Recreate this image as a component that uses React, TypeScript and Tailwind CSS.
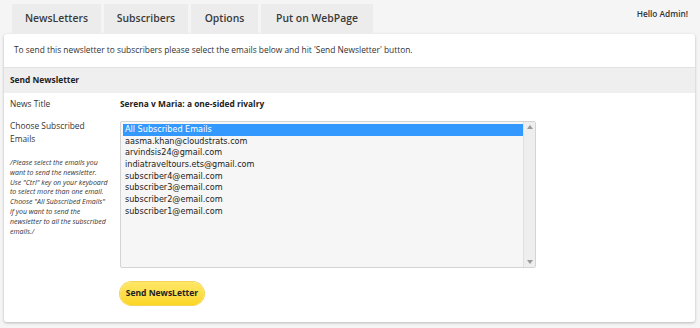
import React, { useState } from 'react';

const tabs = [
  { label: 'NewsLetters', w: 'w-[89px]' },
  { label: 'Subscribers', w: 'w-[84px]' },
  { label: 'Options', w: 'w-[67px]' },
  { label: 'Put on WebPage', w: 'w-[112px]' },
];

const emails = [
  'All Subscribed Emails',
  'aasma.khan@cloudstrats.com',
  'arvindsis24@gmail.com',
  'indiatraveltours.ets@gmail.com',
  'subscriber4@email.com',
  'subscriber3@email.com',
  'subscriber2@email.com',
  'subscriber1@email.com',
];

const noteLines = [
  '/Please select the emails you',
  'want to send the newsletter.',
  'Use "Ctrl" key on your keyboard',
  'to select more than one email.',
  'Choose "All Subscribed Emails"',
  'if you want to send the',
  'newsletter to all the subscribed',
  'emails./',
];

const App: React.FC = () => {
  const [selected, setSelected] = useState(0);

  return (
    <div className="w-[700px] h-[328px] bg-[#f5f5f5] font-['Open_Sans',sans-serif] text-[#222] overflow-hidden">
      {/* Top bar with tabs */}
      <div className="flex items-end justify-between h-[34px] pl-[12px] pr-[12px]">
        <div className="flex gap-[3px] h-[30px]">
          {tabs.map((t) => (
            <div
              key={t.label}
              className={`${t.w} flex items-center justify-center bg-[#ececec] text-[10.4px] font-semibold text-[#3a3a3a]`}
            >
              {t.label}
            </div>
          ))}
        </div>
        <div className="self-start pt-[8px] text-[8.3px] font-semibold text-[#333]">Hello Admin!</div>
      </div>

      {/* Main panel */}
      <div className="ml-[4px] mr-[5px] bg-white rounded-[3px] shadow-[0_1px_3px_rgba(0,0,0,0.25)] h-[288px] flex flex-col">
        <div className="h-[33px] flex items-center px-[10px] text-[8.4px] text-[#333]">
          To send this newsletter to subscribers please select the emails below and hit 'Send Newsletter' button.
        </div>
        <div className="h-[26px] flex items-center px-[6px] bg-[#efefef] border-t border-[#e2e2e2] text-[8.4px] font-bold text-[#222]">
          Send Newsletter
        </div>

        <div className="flex pl-[6px] pt-[1px]">
          <div className="w-[110px] text-[8.4px] text-[#333]">
            <div className="h-[20px] flex items-center">News Title</div>
            <div className="mt-[5px] leading-[13px]">
              Choose Subscribed
              <br />
              Emails
            </div>
            <div className="mt-[13px] text-[7px] italic leading-[9.8px] text-[#333] whitespace-nowrap">
              {noteLines.map((l) => (
                <div key={l}>{l}</div>
              ))}
            </div>
          </div>

          <div className="flex flex-col">
            <div className="h-[20px] flex items-center text-[8.4px] font-bold text-[#222]">
              Serena v Maria: a one-sided rivalry
            </div>
            <div className="mt-[7px] w-[416px] h-[147px] flex border border-[#d4d4d4] rounded-[2px] bg-[#f6f6f6]">
              <div className="flex-1 pt-[2px] pl-[2px] font-['DejaVu_Sans_Condensed','Liberation_Sans',sans-serif] text-[9px] leading-[11.7px] text-[#222]">
                {emails.map((e, i) => (
                  <div
                    key={e}
                    onClick={() => setSelected(i)}
                    className={`pl-[2px] ${i === 0 ? 'leading-[10.5px] pb-[1px]' : ''} ${
                      selected === i ? 'bg-[#3399ff] text-white' : ''
                    }`}
                  >
                    {e}
                  </div>
                ))}
              </div>
              <div className="w-[12px] bg-[#eeeeee] border-l border-[#e0e0e0] flex flex-col justify-between items-center py-[3px]">
                <svg width="6" height="4" viewBox="0 0 6 4">
                  <path d="M3 0 L6 4 L0 4 Z" fill="#9a9a9a" />
                </svg>
                <svg width="6" height="4" viewBox="0 0 6 4">
                  <path d="M0 0 L6 0 L3 4 Z" fill="#9a9a9a" />
                </svg>
              </div>
            </div>
            <button className="mt-[14px] w-[84px] h-[23px] rounded-full bg-gradient-to-b from-[#ffe766] to-[#fbd61f] text-[8.5px] font-bold text-[#222] whitespace-nowrap shadow-[0_0_0_1px_#f3d35a]">
              Send NewsLetter
            </button>
          </div>
        </div>
      </div>
    </div>
  );
};

export default App;
